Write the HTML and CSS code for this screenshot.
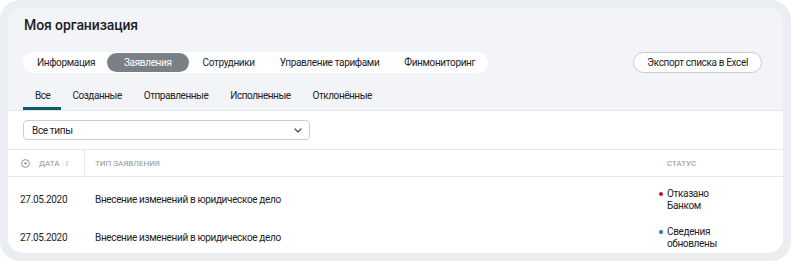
FILE: index.html
```html
<!DOCTYPE html>
<html lang="ru">
<head>
<meta charset="utf-8">
<link rel="stylesheet" href="styles.css">
</head>
<body>
<div class="frame">
  <div class="card">
    <div class="head">
      <h1 class="title">Моя организация</h1>
      <div class="toolbar">
        <nav class="pills">
          <span class="pill">Информация</span>
          <span class="pill active">Заявления</span>
          <span class="pill">Сотрудники</span>
          <span class="pill">Управление тарифами</span>
          <span class="pill">Финмониторинг</span>
        </nav>
        <button class="export">Экспорт списка в Excel</button>
      </div>
      <nav class="subtabs">
        <span class="subtab active">Все</span>
        <span class="subtab">Созданные</span>
        <span class="subtab">Отправленные</span>
        <span class="subtab">Исполненные</span>
        <span class="subtab">Отклонённые</span>
      </nav>
    </div>
    <div class="body">
      <div class="filter">
        <span>Все типы</span>
        <svg class="chev" width="8" height="5" viewBox="0 0 8 5"><path d="M1 1l3 3 3-3" fill="none" stroke="#4a4f55" stroke-width="1.3" stroke-linecap="round" stroke-linejoin="round"/></svg>
      </div>
      <div class="table">
        <div class="thead">
          <div class="th th-date">
            <svg class="circ" width="9" height="9" viewBox="0 0 9 9"><circle cx="4.5" cy="4.5" r="3.9" fill="none" stroke="#7d848c" stroke-width="0.9"/><path d="M2.9 3.7h3.2L4.5 5.7z" fill="#5f666e"/></svg>
            <span>Дата</span>
            <svg class="sort" width="4" height="7" viewBox="0 0 4 7"><path d="M2 0.5L3.6 2.8H0.4z M2 6.5L3.6 4.2H0.4z" fill="#c3c8ce"/></svg>
          </div>
          <div class="th th-type">Тип заявления</div>
          <div class="th th-status">Статус</div>
          <div class="th"></div>
        </div>
        <div class="row">
          <div class="td td-date">27.05.2020</div>
          <div class="td td-type">Внесение изменений в юридическое дело</div>
          <div class="td td-status"><i class="dot red"></i><span>Отказано<br>Банком</span></div>
          <div class="td"></div>
        </div>
        <div class="row">
          <div class="td td-date">27.05.2020</div>
          <div class="td td-type">Внесение изменений в юридическое дело</div>
          <div class="td td-status"><i class="dot teal"></i><span>Сведения<br>обновлены</span></div>
          <div class="td"></div>
        </div>
      </div>
    </div>
  </div>
</div>
</body>
</html>
```
FILE: styles.css
```css
html, body {
  margin: 0;
  padding: 0;
  background: #ffffff;
}
body {
  font-family: Roboto, "Liberation Sans", sans-serif;
  color: #1e2226;
  font-size: 10px;
  letter-spacing: -0.35px;
}
.frame {
  width: 791px;
  height: 261px;
  box-sizing: border-box;
  padding: 8px;
  background: #eaedf1;
  border-radius: 20px;
}
.card {
  height: 245px;
  border-radius: 15px;
  background: #ffffff;
  overflow: hidden;
}
.head {
  background: #f2f4f7;
  border-bottom: 1px solid #e2e6ea;
  padding: 8px 21px 0 15px;
}
.title {
  margin: 0 0 18px 1px;
  font-size: 14px;
  line-height: 18px;
  font-weight: 500;
  letter-spacing: -0.1px;
  color: #1d2126;
}
.toolbar {
  display: flex;
  justify-content: space-between;
  align-items: center;
  height: 21px;
}
.pills {
  display: flex;
  background: #ffffff;
  border-radius: 11px;
  padding: 1px;
}
.pill {
  height: 19px;
  line-height: 19px;
  padding: 0 12px 0 13px;
  border-radius: 10px;
  color: #1e2226;
}
.pill.active {
  background: #7b8087;
  color: #ffffff;
  padding: 0 17px;
  margin-right: 1px;
}
.export {
  height: 21px;
  box-sizing: border-box;
  border: 1px solid #c6ccd3;
  border-radius: 11px;
  background: #ffffff;
  padding: 0 13px;
  font-family: Roboto, "Liberation Sans", sans-serif;
  font-size: 10px;
  letter-spacing: -0.35px;
  color: #1e2226;
}
.subtabs {
  display: flex;
  margin-top: 16px;
}
.subtab {
  padding: 0 11px 4px;
  line-height: 14px;
  letter-spacing: -0.45px;
  border-bottom: 3px solid transparent;
}
.subtab.active {
  border-bottom-color: #0e5b6c;
  padding: 0 11px 4px 12px;
}
.body {
  padding-top: 9px;
}
.filter {
  margin: 0 0 9px 15px;
  width: 287px;
  height: 20px;
  box-sizing: border-box;
  border: 1px solid #c9ced4;
  border-radius: 4px;
  display: flex;
  align-items: center;
  justify-content: space-between;
  padding: 0 7px 0 8px;
}
.thead,
.row {
  display: grid;
  grid-template-columns: 77px 573px 114px 11px;
}
.thead {
  height: 28px;
  box-sizing: border-box;
  border-top: 1px solid #e4e7eb;
  border-bottom: 1px solid #e4e7eb;
}
.th {
  display: flex;
  align-items: center;
  font-size: 8px;
  text-transform: uppercase;
  color: #8c939b;
  letter-spacing: 0;
}
.th-date {
  padding-left: 13px;
  border-right: 1px solid #e4e7eb;
}
.circ {
  margin-right: 9px;
}
.sort {
  margin-left: 6px;
}
.th-type {
  padding-left: 10px;
}
.th-status {
  padding-left: 9px;
}
.row {
  padding: 11px 0 3px;
  align-items: center;
}
.td {
  line-height: 12px;
}
.td-date {
  padding-left: 12px;
  letter-spacing: -0.3px;
}
.td-type {
  padding-left: 10px;
}
.td-status {
  display: flex;
  align-items: flex-start;
  padding-left: 1px;
}
.dot {
  width: 4px;
  height: 4px;
  border-radius: 50%;
  margin: 4px 4px 0 0;
  flex: none;
}
.dot.red {
  background: #c8102e;
}
.dot.teal {
  background: #16878c;
}
```
